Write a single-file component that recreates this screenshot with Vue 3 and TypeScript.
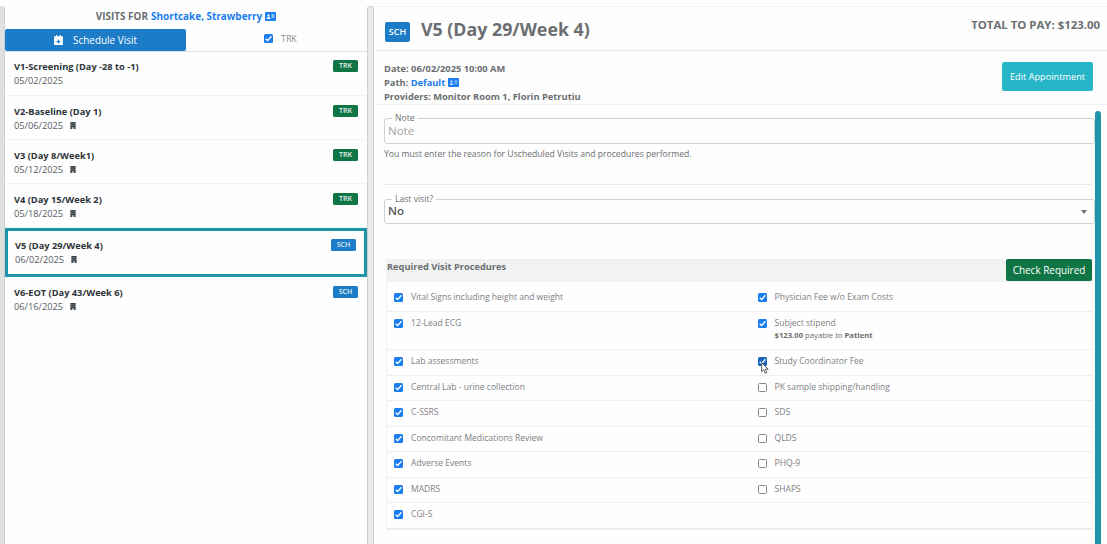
<script setup lang="ts">
interface Visit {
  name: string
  date: string
  status: 'TRK' | 'SCH'
  onSite: boolean
  selected?: boolean
}

interface Procedure {
  label: string
  checked: boolean
  hover?: boolean
  amount?: string
}

const visits: Visit[] = [
  { name: 'V1-Screening (Day -28 to -1)', date: '05/02/2025', status: 'TRK', onSite: false },
  { name: 'V2-Baseline (Day 1)', date: '05/06/2025', status: 'TRK', onSite: true },
  { name: 'V3 (Day 8/Week1)', date: '05/12/2025', status: 'TRK', onSite: true },
  { name: 'V4 (Day 15/Week 2)', date: '05/18/2025', status: 'TRK', onSite: true },
  { name: 'V5 (Day 29/Week 4)', date: '06/02/2025', status: 'SCH', onSite: true, selected: true },
  { name: 'V6-EOT (Day 43/Week 6)', date: '06/16/2025', status: 'SCH', onSite: true },
]

const rows: Procedure[][] = [
  [{ label: 'Vital Signs including height and weight', checked: true }, { label: 'Physician Fee w/o Exam Costs', checked: true }],
  [{ label: '12-Lead ECG', checked: true }, { label: 'Subject stipend', checked: true, amount: '$123.00' }],
  [{ label: 'Lab assessments', checked: true }, { label: 'Study Coordinator Fee', checked: true, hover: true }],
  [{ label: 'Central Lab - urine collection', checked: true }, { label: 'PK sample shipping/handling', checked: false }],
  [{ label: 'C-SSRS', checked: true }, { label: 'SDS', checked: false }],
  [{ label: 'Concomitant Medications Review', checked: true }, { label: 'QLDS', checked: false }],
  [{ label: 'Adverse Events', checked: true }, { label: 'PHQ-9', checked: false }],
  [{ label: 'MADRS', checked: true }, { label: 'SHAPS', checked: false }],
  [{ label: 'CGI-S', checked: true }],
]
</script>

<template>
  <div class="page">
    <div class="rail rail-left"></div>
    <aside class="visits">
      <div class="visits-title">
        <span>VISITS FOR</span>
        <a class="link">Shortcake, Strawberry</a>
        <svg class="card-icon" viewBox="0 0 22 18">
          <rect width="22" height="18" rx="2" fill="#1a7df0" />
          <circle cx="7" cy="7" r="2.3" fill="#fff" />
          <path d="M3 14q0-4 4-4t4 4z M13 5h6v2h-6z M13 9h6v2h-6z" fill="#fff" />
        </svg>
      </div>
      <div class="tools">
        <button class="schedule">
          <svg class="cal-icon" viewBox="0 0 14 16">
            <path d="M3 0h2v2h4V0h2v2h2.200q.8 0 .8.8V5H0V2.800q0-.8.8-.8H3z M0 5h14v10.200q0 .8-.8.8H.8q-.8 0-.8-.8z" fill="#fff" />
            <path d="M6 7.500h2v2h2v2H8v2H6v-2H4v-2h2z" fill="#1c7cc7" />
          </svg>
          <span>Schedule Visit</span>
        </button>
        <label class="filter">
          <span class="check on"><svg viewBox="0 0 9 9"><path d="M1.700 4.700 3.700 6.600 7.400 2.300" /></svg></span>
          <span>TRK</span>
        </label>
      </div>
      <div v-for="v in visits" :key="v.name" class="visit" :class="{ selected: v.selected }">
        <div>
          <div class="visit-name">{{ v.name }}</div>
          <div class="visit-date">
            <span>{{ v.date }}</span>
            <svg v-if="v.onSite" class="building" viewBox="0 0 12 16">
              <path d="M0 0h12v16H7.500v-4h-3v4H0z" fill="#3c454b" />
              <path d="M2.500 3h2v2h-2z M7.500 3h2v2h-2z M2.500 7h2v2h-2z M7.500 7h2v2h-2z" fill="#8d9498" />
            </svg>
          </div>
        </div>
        <span class="badge" :class="v.status.toLowerCase()">{{ v.status }}</span>
      </div>
    </aside>
    <div class="rail rail-mid"></div>

    <main class="detail">
      <header class="detail-head">
        <span class="big-badge">SCH</span>
        <h1>V5 (Day 29/Week 4)</h1>
        <span class="total">TOTAL TO PAY: $123.00</span>
      </header>
      <section class="info">
        <div class="info-lines">
          <div>Date: 06/02/2025 10:00 AM</div>
          <div class="path-line">
            <span>Path: <a class="link">Default</a></span>
            <svg class="card-icon" viewBox="0 0 22 18">
              <rect width="22" height="18" rx="2" fill="#1a7df0" />
              <circle cx="7" cy="7" r="2.300" fill="#b9d8fb" />
              <path d="M3 14q0-4 4-4t4 4z M13 5h6v2h-6z M13 9h6v2h-6z" fill="#b9d8fb" />
            </svg>
          </div>
          <div class="providers">Providers: Monitor Room 1, Florin Petrutiu</div>
        </div>
        <button class="edit">Edit Appointment</button>
      </section>
      <section class="body">
        <fieldset class="field note">
          <legend>Note</legend>
          <span class="placeholder">Note</span>
        </fieldset>
        <p class="hint">You must enter the reason for Uscheduled Visits and procedures performed.</p>
        <fieldset class="field last">
          <legend>Last visit?</legend>
          <span class="value">No</span>
          <i class="caret"></i>
        </fieldset>
        <div class="table">
          <div class="table-head">
            <span>Required Visit Procedures</span>
            <button class="require">Check Required</button>
          </div>
          <div v-for="(row, i) in rows" :key="i" class="row">
            <div v-for="p in row" :key="p.label" class="cell">
              <span class="check" :class="{ on: p.checked, hover: p.hover }">
                <svg v-if="p.checked" viewBox="0 0 9 9"><path d="M1.700 4.700 3.700 6.600 7.400 2.300" /></svg>
                <svg v-if="p.hover" class="cursor" viewBox="0 0 8 12">
                  <path d="M.6.7v9l2.100-2 1.500 3.500 1.600-.7-1.500-3.300h2.900z" />
                </svg>
              </span>
              <div>
                <div class="proc">{{ p.label }}</div>
                <div v-if="p.amount" class="pay"><b>{{ p.amount }}</b> payable to <b>Patient</b></div>
              </div>
            </div>
          </div>
        </div>
      </section>
      <div class="scrollbar"></div>
    </main>
  </div>
</template>

<style>
body {
  background: #fefefe;
  overflow: hidden;
}
</style>

<style scoped>
* {
  box-sizing: border-box;
}
.page {
  display: flex;
  width: 1107px;
  height: 544px;
  padding-top: 6px;
  overflow: hidden;
  background: #fefefe;
  color: #6b6e70;
  font-family: 'Open Sans', 'Noto Sans', sans-serif;
  white-space: nowrap;
}
button {
  border: 0;
  padding: 0;
  color: #fff;
  font-family: inherit;
}
.rail {
  flex: none;
  background: #dfe0e0;
}
.rail-left {
  width: 5px;
  border-right: 1px solid #cfd0d0;
  border-radius: 0 3px 0 0;
}
.rail-mid {
  width: 7px;
  border: 1px solid #cfd0d0;
  border-bottom: 0;
  border-radius: 3px 3px 0 0;
  background: #e9eaea;
}
.link {
  color: #1a7df0;
}
.card-icon {
  width: 11px;
  height: 9px;
}
.visits {
  width: 362px;
  flex: none;
}
.visits-title {
  display: flex;
  align-items: center;
  justify-content: center;
  gap: 3px;
  height: 23px;
  padding-bottom: 3px;
  font-size: 9.950px;
  font-weight: 700;
}
.tools {
  display: flex;
  height: 23px;
  border-bottom: 1px solid #dedfdf;
}
.schedule {
  display: flex;
  align-items: center;
  justify-content: center;
  gap: 10px;
  width: 181px;
  height: 22px;
  border-radius: 2px;
  background: #1c7cc7;
  font-size: 9.950px;
}
.cal-icon {
  width: 9px;
  height: 10px;
}
.filter {
  display: flex;
  flex: 1;
  align-items: center;
  gap: 8px;
  height: 19px;
  padding-left: 78px;
  font-size: 8.900px;
  color: #8a8c8d;
}
.filter .check {
  margin-top: 0;
}
.visit {
  display: flex;
  justify-content: space-between;
  height: 44px;
  padding: 9px 9px 0 9px;
  border-bottom: 1px solid #f1f2f2;
  color: #2d3438;
}
.tools + .visit {
  padding-top: 8px;
}
.visit:last-child {
  border-bottom: 0;
}
.visit-name {
  height: 14px;
  font-size: 9.250px;
  line-height: 14px;
  font-weight: 700;
}
.visit-date {
  display: flex;
  align-items: center;
  gap: 7px;
  height: 12px;
  font-size: 9.250px;
  color: #555b5f;
}
.building {
  width: 6px;
  height: 7px;
  margin-top: 1px;
}
.visit.selected {
  height: 49px;
  padding: 8px 8px 0 7px;
  border: 3px solid #1e93a9;
}
.badge {
  width: 25px;
  height: 12px;
  border-radius: 1.500px;
  color: #e8f2f0;
  font-size: 7px;
  line-height: 12px;
  font-weight: 600;
  text-align: center;
}
.trk {
  background: #0f7545;
}
.sch {
  background: #1c7cc7;
}
.detail {
  position: relative;
  flex: 1;
  border-top: 1px solid #f2f3f3;
}
.detail-head {
  display: flex;
  height: 44px;
  padding: 0 7px 0 11px;
  border-bottom: 1px solid #e6e7e7;
}
.big-badge {
  width: 25px;
  height: 20px;
  margin-top: 15px;
  border-radius: 2px;
  background: #1c7cc7;
  color: #fff;
  font-size: 9px;
  line-height: 20px;
  font-weight: 600;
  text-align: center;
}
h1 {
  margin: 8px auto 0 11px;
  font-size: 17.800px;
  line-height: 28px;
  font-weight: 700;
}
.total {
  margin-top: 9px;
  font-size: 11.400px;
  line-height: 18px;
  font-weight: 700;
}
.info {
  display: flex;
  justify-content: space-between;
  height: 54px;
  padding: 11px 14px 0 10px;
  border-bottom: 1px solid #f1f2f2;
}
.info-lines {
  font-size: 9.300px;
  line-height: 14px;
  font-weight: 700;
}
.path-line {
  display: flex;
  align-items: center;
  gap: 3px;
  height: 13px;
}
.providers {
  margin-top: 1px;
}
.edit {
  width: 91px;
  height: 29px;
  border-radius: 2px;
  background: #27b5c8;
  font-size: 9.200px;
}
.body {
  padding: 7px 12px 0 10px;
}
.field {
  display: flex;
  min-width: 0;
  margin: 0;
  padding: 0 7px 0 3px;
  border: 1px solid #cfd0d0;
  border-radius: 3px;
}
.field legend {
  height: 12px;
  margin-left: 4px;
  padding: 0 3px;
  font-size: 8.600px;
  line-height: 12px;
  color: #6f7274;
}
.note,
.last {
  position: relative;
  height: 32px;
}
.placeholder {
  font-size: 11.500px;
  line-height: 14px;
  color: #a0a2a3;
}
.hint {
  height: 41px;
  margin: 0 3px 0 0;
  padding-top: 4px;
  border-bottom: 1px solid #e9eaea;
  font-size: 8.630px;
  line-height: 12px;
}
.last {
  height: 31px;
  margin-top: 8px;
}
.value {
  font-size: 11.500px;
  line-height: 12px;
  font-weight: 600;
  color: #55595c;
}
.caret {
  position: absolute;
  right: 7px;
  top: 5px;
  border: 3px solid transparent;
  border-top: 4px solid #6d7072;
  border-bottom: 0;
}
.table {
  margin: 35px 2px 0 2px;
  border: 1px solid #f4f5f5;
  border-top: 0;
  border-bottom: 2px solid #ebecec;
}
.table-head {
  display: flex;
  justify-content: space-between;
  height: 23px;
  background: #f1f2f2;
  font-size: 9.250px;
  line-height: 16px;
  font-weight: 700;
}
.require {
  width: 86px;
  height: 22px;
  border-radius: 2px;
  background: #0f7545;
  font-size: 9.950px;
}
.row {
  display: grid;
  grid-template-columns: 363.500px 1fr;
  height: 25.560px;
  padding: 6px 0 0 7px;
  border-top: 1px solid #edeeee;
}
.row:nth-child(2) {
  height: 29px;
  padding-top: 10px;
  border-top: 0;
}
.row:nth-child(3) {
  height: 38px;
}
.cell {
  display: flex;
  align-items: flex-start;
  gap: 8px;
}
.check {
  position: relative;
  flex: none;
  width: 9px;
  height: 9px;
  margin-top: 1px;
  border: 1px solid #858788;
  border-radius: 1.500px;
  background: #fff;
}
.check.on {
  border: 0;
  background: #1a7df0;
}
.check.on.hover {
  background: #1667bd;
}
.check svg {
  display: block;
  width: 9px;
  height: 9px;
  fill: none;
  stroke: #fff;
  stroke-width: 1.400;
}
.check .cursor {
  position: absolute;
  left: 3px;
  top: 5px;
  width: 8px;
  height: 12px;
  fill: #fff;
  stroke: #44484b;
  stroke-width: 0.900;
}
.proc {
  font-size: 8.550px;
  line-height: 11px;
  color: #7e8183;
}
.pay {
  margin-top: 1px;
  font-size: 7.700px;
  line-height: 11px;
}
.scrollbar {
  position: absolute;
  right: 6px;
  top: 104px;
  width: 6px;
  height: 440px;
  border-radius: 3px 3px 0 0;
  background: #1e93a9;
}
</style>
